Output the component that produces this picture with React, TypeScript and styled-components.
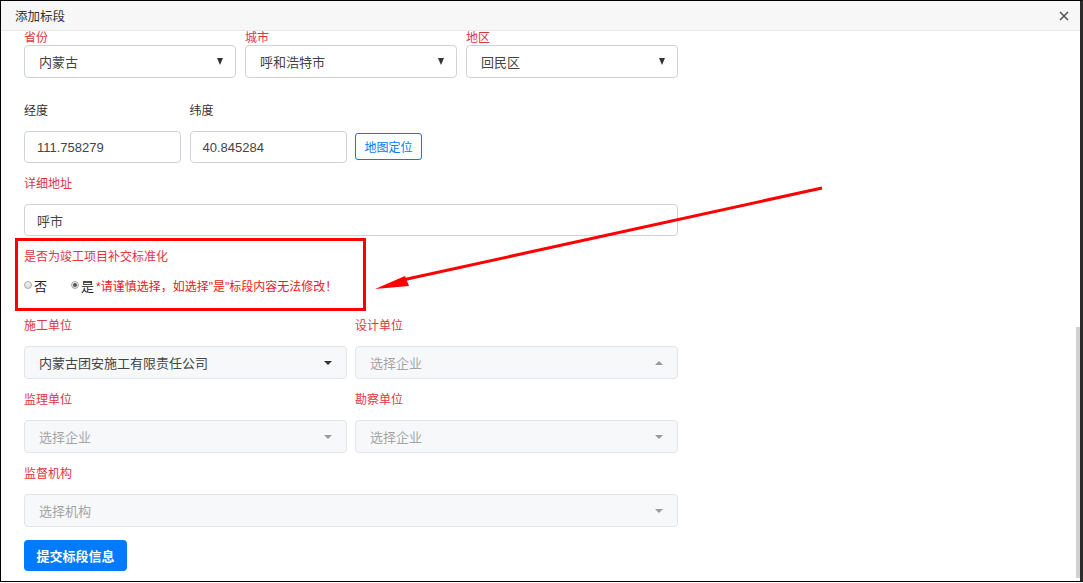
import { FC } from "react";
import styled, { createGlobalStyle } from "styled-components";

const GlobalStyle = createGlobalStyle`
  html, body {
    margin: 0;
    padding: 0;
    background: #fff;
  }
  body {
    font-family: "Liberation Sans", "Noto Sans CJK SC", sans-serif;
    color: #333;
  }
  * {
    box-sizing: border-box;
  }
`;

const Frame = styled.div`
  position: relative;
  width: 1083px;
  height: 582px;
  border-top: 1px solid #000;
  border-left: 1px solid #000;
  border-bottom: 1px solid #000;
  border-right: 3px solid #2b2b2b;
  overflow: hidden;
`;

const Header = styled.div`
  height: 30px;
  padding: 0 14px;
  display: flex;
  align-items: center;
  justify-content: space-between;

  background: #f7f7f7;
  border-bottom: 1px solid #e8e8e8;
  font-size: 12.5px;
  color: #333;
`;

const Close = styled.span`
  width: 10px;
  height: 10px;
  margin-right: -3px;
  display: flex;
`;

const Body = styled.div`
  padding: 0 23px;
`;

const Row = styled.div<{ cols: string; gap: number; top: number }>`
  margin-top: ${({ top }) => top}px;
  width: 654px;
  display: grid;
  grid-template-columns: ${({ cols }) => cols};
  column-gap: ${({ gap }) => gap}px;
  align-items: end;
`;

const Label = styled.div<{ red?: boolean; compact?: boolean }>`
  height: ${({ compact }) => (compact ? 14 : 20)}px;
  margin-bottom: ${({ compact }) => (compact ? 0 : 10)}px;
  line-height: ${({ compact }) => (compact ? 14 : 20)}px;
  font-size: 12px;
  color: ${({ red }) => (red && "#e0343f") || "#333"};
`;

const Select = styled.div<{ muted?: boolean }>`
  position: relative;
  height: 33px;
  padding: 0 14px;
  display: flex;
  align-items: center;

  background: ${({ muted }) => (muted && "#f7f8fa") || "#fff"};
  border: 1px solid ${({ muted }) => (muted && "#e1e4e8") || "#ced4da"};
  border-radius: 4px;
  font-size: 13px;
  color: #444;
`;

const Placeholder = styled.span`
  color: #a5a5a5;
`;

const Caret = styled.span<{ up?: boolean; dark?: boolean; big?: boolean }>`
  margin-left: auto;
  margin-right: ${({ big }) => (big ? -2 : 0)}px;
  width: 0;
  height: 0;
  border-left: ${({ big }) => (big ? 3.5 : 4.5)}px solid transparent;
  border-right: ${({ big }) => (big ? 3.5 : 4.5)}px solid transparent;
  ${({ up, big, dark }) =>
    up
      ? `border-bottom: 4px solid ${dark ? "#222" : "#9a9a9a"};`
      : `border-top: ${big ? 7 : 4}px solid ${dark ? "#333" : "#9a9a9a"};`}
`;

const Input = styled.div`
  height: 32px;
  padding: 0 12px;
  display: flex;
  align-items: center;

  border: 1px solid #ced4da;
  border-radius: 4px;
  font-size: 13px;
  color: #444;
`;

const MapButton = styled.button`
  align-self: end;
  margin-bottom: 3px;
  width: 67px;
  height: 27px;
  padding: 0;

  background: #fff;
  border: 1px solid #007bff;
  border-radius: 3px;
  font-family: inherit;
  font-size: 12px;
  color: #007bff;
`;

const Highlight = styled.div`
  margin-top: 2px;
  margin-left: -9px;
  width: 351px;
  padding: 6px 0 13px 6px;
  border: 3px solid #ff0000;
`;

const RadioRow = styled.div`
  margin-top: 8px;
  height: 20px;
  display: flex;
  align-items: center;
  font-size: 13px;
  color: #222;
`;

const RadioItem = styled.label<{ gap: number }>`
  margin-right: ${({ gap }) => gap}px;
  display: flex;
  align-items: center;
`;

const Radio = styled.span<{ checked?: boolean }>`
  margin-right: 2px;
  width: 8px;
  height: 8px;
  display: flex;
  align-items: center;
  justify-content: center;

  background: linear-gradient(#f4f4f4, #dcdcdc);
  border: 1px solid #a8a8a8;
  border-radius: 50%;

  &::after {
    content: "";
    width: 4px;
    height: 4px;
    border-radius: 50%;
    background: ${({ checked }) => (checked && "#555") || "transparent"};
  }
`;

const Warning = styled.span`
  margin-left: -22px;
  font-size: 12px;
  color: #f01818;
`;

const Submit = styled.button`
  margin-top: 13px;
  width: 103px;
  height: 31px;
  padding: 0;

  background: #007bff;
  border: none;
  border-radius: 4px;
  font-family: inherit;
  font-size: 13px;
  font-weight: bold;
  color: #fff;
`;

const Thumb = styled.div`
  position: absolute;
  right: 0;
  top: 326px;
  width: 4px;
  bottom: 3px;
  background: #d2d2d2;
`;

const Annotation = styled.svg`
  position: absolute;
  left: -1px;
  top: -1px;
  width: 1083px;
  height: 583px;
  pointer-events: none;
`;

const Field: FC<{ label: string; red?: boolean; compact?: boolean; children: React.ReactNode }> = ({
  label,
  red,
  compact,
  children,
}) => (
  <div>
    <Label red={red} compact={compact}>
      {label}
    </Label>
    {children}
  </div>
);

const Company: FC<{ text: string; up?: boolean }> = ({ text, up }) => (
  <Select muted>
    <Placeholder>{text}</Placeholder>
    <Caret up={up} />
  </Select>
);

export default function App() {
  return (
    <Frame>
      <GlobalStyle />
      <Header>
        <span>添加标段</span>
        <Close>
          <svg width="10" height="10" viewBox="0 0 10 10">
            <path d="M1 1L9 9M9 1L1 9" stroke="#555" strokeWidth="1.6" />
          </svg>
        </Close>
      </Header>
      <Body>
        <Row cols="repeat(3, 212px)" gap={9} top={0}>
          <Field label="省份" red compact>
            <Select>
              内蒙古
              <Caret dark big />
            </Select>
          </Field>
          <Field label="城市" red compact>
            <Select>
              呼和浩特市
              <Caret dark big />
            </Select>
          </Field>
          <Field label="地区" red compact>
            <Select>
              回民区
              <Caret dark big />
            </Select>
          </Field>
        </Row>

        <Row cols="157px 157px 67px" gap={8.5} top={23}>
          <Field label="经度">
            <Input>111.758279</Input>
          </Field>
          <Field label="纬度">
            <Input>40.845284</Input>
          </Field>
          <MapButton>地图定位</MapButton>
        </Row>

        <Row cols="654px" gap={0} top={11}>
          <Field label="详细地址" red>
            <Input>呼市</Input>
          </Field>
        </Row>

        <Highlight>
          <Label red compact={false} style={{ marginBottom: 0 }}>
            是否为竣工项目补交标准化
          </Label>
          <RadioRow>
            <RadioItem gap={24}>
              <Radio />否
            </RadioItem>
            <RadioItem gap={24}>
              <Radio checked />是
            </RadioItem>
            <Warning>*请谨慎选择，如选择"是"标段内容无法修改！</Warning>
          </RadioRow>
        </Highlight>

        <Row cols="323px 323px" gap={8} top={5}>
          <Field label="施工单位" red>
            <Select muted>
              内蒙古团安施工有限责任公司
              <Caret dark />
            </Select>
          </Field>
          <Field label="设计单位" red>
            <Company text="选择企业" up />
          </Field>
        </Row>

        <Row cols="323px 323px" gap={8} top={11}>
          <Field label="监理单位" red>
            <Company text="选择企业" />
          </Field>
          <Field label="勘察单位" red>
            <Company text="选择企业" />
          </Field>
        </Row>

        <Row cols="654px" gap={0} top={11}>
          <Field label="监督机构" red>
            <Company text="选择机构" />
          </Field>
        </Row>

        <Submit>提交标段信息</Submit>
      </Body>
      <Thumb />
      <Annotation viewBox="0 0 1083 583">
        <line x1="822" y1="188" x2="398" y2="281" stroke="#ff0000" strokeWidth="3" />
        <polygon points="375,289 405,276 409,286" fill="#ff0000" />
      </Annotation>
    </Frame>
  );
}
